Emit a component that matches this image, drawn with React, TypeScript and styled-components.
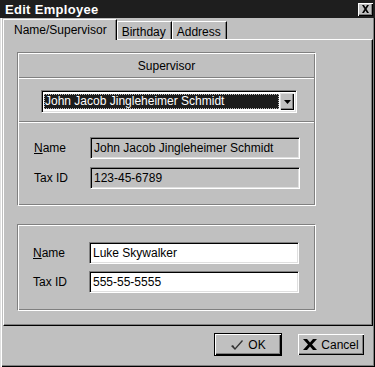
import React from 'react'
import styled, { createGlobalStyle } from 'styled-components'

const GlobalStyle = createGlobalStyle`
  html, body {
    margin: 0;
    padding: 0;
    background: #c0c0c0;
  }
  body {
    font-family: "Liberation Sans", Arial, sans-serif;
    font-size: 12px;
    color: #000;
  }
`

export default function App() {
  return (
    <>
      <GlobalStyle />
      <Window>
        <TitleBar>
          <Title>Edit Employee</Title>
          <CloseButton>
            <svg width="9" height="8" viewBox="0 0 9 8">
              <path d="M1 0h2l1.5 2.5L6 0h2L5.5 4 8 8H6L4.5 5.5 3 8H1l2.5-4z" fill="#000" />
            </svg>
          </CloseButton>
        </TitleBar>

        <Body>
          <TabStrip>
            <Tab $active>Name/Supervisor</Tab>
            <Tab>Birthday</Tab>
            <Tab>Address</Tab>
          </TabStrip>

          <TabPane>
            <Group $height={154}>
              <GroupHeader>Supervisor</GroupHeader>
              <ComboRow>
                <Combo>
                  <ComboValue>
                    <Selected>John Jacob Jingleheimer Schmidt</Selected>
                  </ComboValue>
                  <ComboButton>
                    <svg width="7" height="4" viewBox="0 0 7 4">
                      <path d="M0 0h7L3.5 4z" fill="#000" />
                    </svg>
                  </ComboButton>
                </Combo>
              </ComboRow>
              <SubPanel>
                <FieldRow>
                  <Label>
                    <u>N</u>ame
                  </Label>
                  <Field $disabled>John Jacob Jingleheimer Schmidt</Field>
                </FieldRow>
                <FieldRow>
                  <Label>Tax ID</Label>
                  <Field $disabled>123-45-6789</Field>
                </FieldRow>
              </SubPanel>
            </Group>

            <Group $height={87} $top={18}>
              <Fields>
                <FieldRow>
                  <Label>
                    <u>N</u>ame
                  </Label>
                  <Field>Luke Skywalker</Field>
                </FieldRow>
                <FieldRow>
                  <Label>Tax ID</Label>
                  <Field>555-55-5555</Field>
                </FieldRow>
              </Fields>
            </Group>
          </TabPane>

          <Footer>
            <Button $default>
              <svg width="14" height="12" viewBox="0 0 14 12">
                <path d="M1 7l2-1 2 3L12 1l1 1-8 9z" fill="#333" />
              </svg>
              OK
            </Button>
            <Button>
              <svg width="14" height="13" viewBox="0 0 14 13">
                <path d="M0 1h4l3 3.5L10 1h4L9 6.5l5 5.5h-4L7 8.5 4 12H0l5-5.5z" fill="#000" />
              </svg>
              Cancel
            </Button>
          </Footer>
        </Body>
      </Window>
    </>
  )
}

const Window = styled.div`
  width: 375px;
  height: 367px;
  box-sizing: border-box;
  display: flex;
  flex-direction: column;
  background: #c0c0c0;
  box-shadow: inset 1px 1px #dfdfdf, inset 2px 2px #fff, inset -1px -1px #000, inset -2px -2px #808080;
`

const TitleBar = styled.div`
  height: 18px;
  display: flex;
  align-items: center;
  justify-content: space-between;
  padding: 0 2px 0 5px;
  background: #1e1e1e;
  flex-shrink: 0;
`

const Title = styled.span`
  color: #fff;
  font-weight: bold;
  font-size: 13px;
  letter-spacing: 0.3px;
`

const CloseButton = styled.div`
  width: 15px;
  height: 13px;
  box-sizing: border-box;
  display: flex;
  align-items: center;
  justify-content: center;
  background: #c0c0c0;
  box-shadow: inset 1px 1px #fff, inset -1px -1px #000, inset -2px -2px #808080;
`

const Body = styled.div`
  flex: 1;
  display: flex;
  flex-direction: column;
  padding: 0 2px 0 3px;
`

const TabStrip = styled.div`
  height: 21px;
  display: flex;
  align-items: flex-end;
  position: relative;
  z-index: 1;
`

const Tab = styled.div<{ $active?: boolean }>`
  height: ${(p) => (p.$active ? 21 : 18)}px;
  box-sizing: border-box;
  padding: 2px ${(p) => (p.$active ? 9 : 5)}px 0 ${(p) => (p.$active ? 10 : 4)}px;
  margin-bottom: ${(p) => (p.$active ? -1 : 0)}px;
  background: #c0c0c0;
  border-top: 1px solid #fff;
  border-left: 1px solid #fff;
  border-right: 1px solid #000;
  box-shadow: inset -1px 0 #808080;
  font-size: 12px;
  line-height: 16px;
  white-space: nowrap;
`

const TabPane = styled.div`
  height: 287px;
  box-sizing: border-box;
  display: flex;
  flex-direction: column;
  padding: 12px 0 0 13px;
  border-top: 1px solid #fff;
  border-left: 1px solid #fff;
  border-right: 1px solid #000;
  border-bottom: 1px solid #000;
  box-shadow: inset -1px -1px #808080;
`

const Group = styled.div<{ $height: number; $top?: number }>`
  width: 299px;
  height: ${(p) => p.$height}px;
  margin-top: ${(p) => p.$top ?? 0}px;
  box-sizing: border-box;
  display: flex;
  flex-direction: column;
  border: 1px solid;
  border-color: #808080 #fff #fff #808080;
  box-shadow: inset 1px 1px #fff, inset -1px -1px #808080;
`

const GroupHeader = styled.div`
  height: 23px;
  display: flex;
  align-items: center;
  justify-content: center;
  font-size: 12px;
  margin: 1px 1px 0 1px;
  border-bottom: 1px solid #808080;
  box-shadow: 0 1px #fff;
`

const ComboRow = styled.div`
  padding: 12px 0 0 23px;
  height: 35px;
  box-sizing: border-box;
`

const Combo = styled.div`
  width: 256px;
  height: 23px;
  box-sizing: border-box;
  display: flex;
  align-items: stretch;
  padding: 2px;
  background: #fff;
  border: 1px solid;
  border-color: #808080 #fff #fff #808080;
  box-shadow: inset 1px 1px #000, inset -1px -1px #dfdfdf;
`

const ComboValue = styled.div`
  flex: 1;
  display: flex;
  align-items: stretch;
  padding: 1px 1px 1px 0;
`

const Selected = styled.div`
  flex: 1;
  background: #1c1c1c;
  color: #fff;
  font-size: 12px;
  line-height: 15px;
  padding-left: 1px;
  outline: 1px dotted #bbb;
  outline-offset: -1px;
  white-space: nowrap;
  overflow: hidden;
`

const ComboButton = styled.div`
  width: 14px;
  display: flex;
  align-items: center;
  justify-content: center;
  background: #c0c0c0;
  box-shadow: inset 1px 1px #dfdfdf, inset -1px -1px #000, inset -2px -2px #808080;
`

const SubPanel = styled.div`
  flex: 1;
  display: flex;
  flex-direction: column;
  gap: 8px;
  padding: 15px 0 0 15px;
  margin: 8px 1px 0 1px;
  border-top: 1px solid #808080;
  box-shadow: inset 0 1px #fff;
`

const Fields = styled.div`
  display: flex;
  flex-direction: column;
  gap: 7px;
  padding: 17px 0 0 15px;
`

const FieldRow = styled.div`
  display: flex;
  align-items: center;
`

const Label = styled.span`
  width: 56px;
  font-size: 12px;
`

const Field = styled.div<{ $disabled?: boolean }>`
  width: 210px;
  height: 22px;
  box-sizing: border-box;
  padding: 3px 3px;
  font-size: 12px;
  line-height: 15px;
  background: ${(p) => (p.$disabled ? '#c0c0c0' : '#fff')};
  border: 1px solid;
  border-color: #808080 #fff #fff #808080;
  box-shadow: inset 1px 1px #000, inset -1px -1px #dfdfdf;
  white-space: nowrap;
  overflow: hidden;
`

const Footer = styled.div`
  display: flex;
  justify-content: flex-end;
  gap: 15px;
  padding: 7px 8px 0 0;
`

const Button = styled.div<{ $default?: boolean }>`
  width: 68px;
  height: 23px;
  box-sizing: border-box;
  display: flex;
  align-items: center;
  justify-content: center;
  gap: 4px;
  font-size: 12px;
  background: #c0c0c0;
  border: 1px solid ${(p) => (p.$default ? '#000' : 'transparent')};
  box-shadow: inset 1px 1px #fff, inset -1px -1px #000, inset -2px -2px #808080;
`
